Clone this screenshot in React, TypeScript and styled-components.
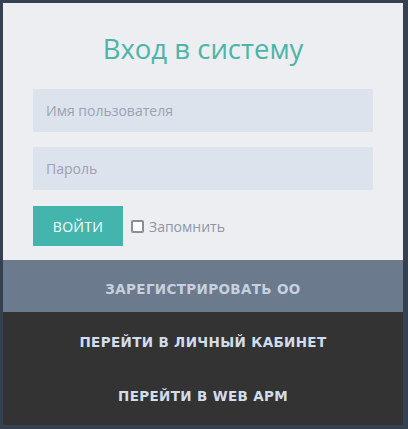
import React from "react";
import styled, { createGlobalStyle } from "styled-components";

const Global = createGlobalStyle`
  html, body { margin: 0; padding: 0; background: #354150; }
  body { font-family: "Open Sans", "Liberation Sans", sans-serif; }
  * { box-sizing: border-box; }
`;

const Frame = styled.div`
  width: 408px;
  height: 429px;
  padding: 3px 5px 4px 3px;
  background: #354150;
`;

const Card = styled.div`
  width: 400px;
  height: 422px;
  display: flex;
  flex-direction: column;
  background: #edeef2;
`;

const Form = styled.form`
  height: 257px;
  display: flex;
  flex-direction: column;
  padding: 0 30px;
`;

const Title = styled.h1`
  margin: 28px 0 0;
  height: 58px;
  text-align: center;
  font-family: "Open Sans", sans-serif;
  font-weight: 400;
  font-size: 27.5px;
  line-height: 36px;
  color: #4bb5a8;
`;

const Input = styled.input`
  width: 340px;
  height: 43px;
  border: none;
  outline: none;
  background: #dde3ec;
  padding: 0 13px;
  margin-bottom: 15px;
  font-family: "Open Sans", sans-serif;
  font-size: 14px;
  color: #555;
  &::placeholder { color: #9aa2b3; }
`;

const Actions = styled.div`
  display: flex;
  align-items: center;
  margin-top: 1px;
  gap: 8px;
`;

const LoginButton = styled.button`
  width: 90px;
  height: 40px;
  border: none;
  background: #44b5ad;
  color: #ffffff;
  font-family: "Open Sans", sans-serif;
  font-size: 14px;
  letter-spacing: 0.3px;
  cursor: pointer;
`;

const Remember = styled.label`
  display: flex;
  align-items: center;
  gap: 5px;
  font-family: "Open Sans", sans-serif;
  font-size: 14px;
  color: #8e97a8;
`;

const Box = styled.span`
  display: inline-block;
  width: 13px;
  height: 13px;
  border: 2px solid #8a8e9a;
  border-radius: 2px;
  background: #ffffff;
`;

const Band = styled.a<{ $tone: "grey" | "dark" }>`
  display: flex;
  align-items: center;
  justify-content: center;
  height: ${(p) => (p.$tone === "grey" ? 52 : 54)}px;
  padding-top: ${(p) => (p.$tone === "grey" ? 5 : 0)}px;
  font-family: "DejaVu Sans", sans-serif;
  font-weight: 700;
  font-size: 13.5px;
  letter-spacing: 0.35px;
  text-decoration: none;
  color: ${(p) => (p.$tone === "grey" ? "#c6d0de" : "#d2dcea")};
  background: ${(p) => (p.$tone === "grey" ? "#6b7a8c" : "transparent")};
`;

const Dark = styled.div`
  flex: 1;
  background: #333333;
  padding-top: 3px;
  display: flex;
  flex-direction: column;
`;

export default function App() {
  return (
    <>
      <Global />
      <Frame>
        <Card>
          <Form onSubmit={(e) => e.preventDefault()}>
            <Title>Вход в систему</Title>
            <Input placeholder="Имя пользователя" />
            <Input type="password" placeholder="Пароль" />
            <Actions>
              <LoginButton type="submit">ВОЙТИ</LoginButton>
              <Remember>
                <Box />
                Запомнить
              </Remember>
            </Actions>
          </Form>
          <Band $tone="grey">ЗАРЕГИСТРИРОВАТЬ ОО</Band>
          <Dark>
            <Band $tone="dark">ПЕРЕЙТИ В ЛИЧНЫЙ КАБИНЕТ</Band>
            <Band $tone="dark">ПЕРЕЙТИ В WEB АРМ</Band>
          </Dark>
        </Card>
      </Frame>
    </>
  );
}
